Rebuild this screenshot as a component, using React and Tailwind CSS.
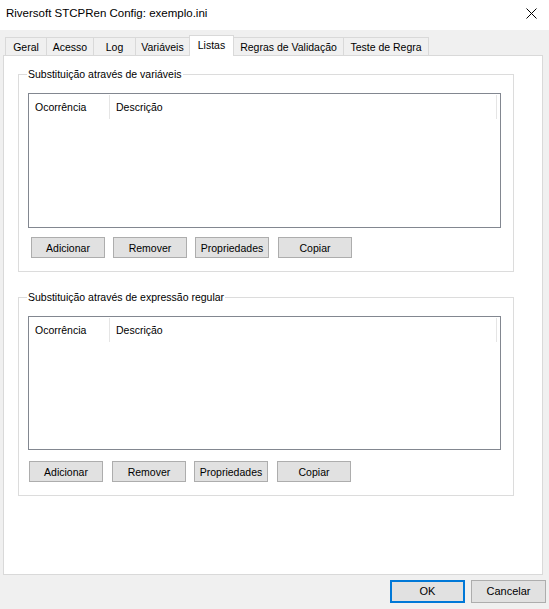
const tabs = [
  { label: "Geral", w: "w-[42px]" },
  { label: "Acesso", w: "w-[48px]" },
  { label: "Log", w: "w-[43px]" },
  { label: "Variáveis", w: "w-[55px]" },
  { label: "Listas", w: "w-[45px]", selected: true },
  { label: "Regras de Validação", w: "w-[111px]" },
  { label: "Teste de Regra", w: "w-[86px]" },
];

function Tab({ label, w, selected, first }) {
  if (selected) {
    return (
      <div
        className={`${w} h-[21px] -mb-px -ml-px relative z-10 bg-white border border-b-0 border-[#d9d9d9] flex items-start justify-center pt-[4px] leading-none`}
      >
        {label}
      </div>
    );
  }
  return (
    <div
      className={`${w} h-[18px] ${first ? "" : "-ml-px"} bg-[#f0f0f0] border border-b-0 border-[#d9d9d9] flex items-center justify-center leading-none pt-px`}
    >
      {label}
    </div>
  );
}

function Btn({ children, className = "" }) {
  return (
    <div
      className={`w-[74px] h-[21px] bg-[#e1e1e1] border border-[#adadad] flex items-center justify-center leading-none pt-px ${className}`}
    >
      {children}
    </div>
  );
}

function ListView({ h }) {
  return (
    <div className={`ml-[9px] w-[473px] ${h} border border-[#828790] bg-white`}>
      <div className="h-[25px] flex items-stretch">
        <div className="w-[80px] flex items-center pl-[6px] leading-none pt-px">Ocorrência</div>
        <div className="w-px bg-[#e5e5e5] mt-px" />
        <div className="w-[386px] flex items-center pl-[6px] leading-none pt-px">Descrição</div>
        <div className="w-px bg-[#e5e5e5] mt-px" />
      </div>
    </div>
  );
}

function Group({ title, className, listH, btnMt, btnMl, gaps }) {
  return (
    <div className={`relative w-[496px] border border-[#dcdcdc] flex flex-col ${className}`}>
      <span className="absolute left-[8px] -top-[6px] bg-white px-px leading-none">{title}</span>
      <div className="mt-[18px]">
        <ListView h={listH} />
      </div>
      <div className={`flex ${btnMt} ${btnMl}`}>
        <Btn>Adicionar</Btn>
        <Btn className={gaps[0]}>Remover</Btn>
        <Btn className={gaps[1]}>Propriedades</Btn>
        <Btn className={gaps[2]}>Copiar</Btn>
      </div>
    </div>
  );
}

export default function App() {
  return (
    <div className="w-[549px] h-[609px] bg-[#f0f0f0] flex flex-col font-['Liberation_Sans',Arial,sans-serif] text-[10.5px] text-black overflow-hidden">
      <div className="h-[30px] bg-white flex items-center shrink-0">
        <span className="ml-[6px] text-[11.5px] leading-none -mt-[3px]">Riversoft STCPRen Config: exemplo.ini</span>
        <svg className="ml-auto mr-[12px] -mt-[4px]" width="11" height="11" viewBox="0 0 11 11">
          <path d="M0.5 0.5L10.5 10.5M10.5 0.5L0.5 10.5" stroke="#000" strokeWidth="1" />
        </svg>
      </div>

      <div className="mt-[5px] h-[20px] flex items-end pl-[5px] shrink-0">
        {tabs.map((t, i) => (
          <Tab key={t.label} {...t} first={i === 0} />
        ))}
      </div>

      <div className="ml-[3px] w-[540px] h-[520px] border border-[#d9d9d9] bg-white flex flex-col pl-[14px] shrink-0">
        <Group
          title="Substituição através de variáveis"
          className="mt-[18px] h-[198px]"
          listH="h-[135px]"
          btnMt="mt-[9px]"
          btnMl="ml-[12px]"
          gaps={["ml-[8px]", "ml-[8px]", "ml-[9px]"]}
        />
        <Group
          title="Substituição através de expressão regular"
          className="mt-[25px] h-[199px]"
          listH="h-[134px]"
          btnMt="mt-[11px]"
          btnMl="ml-[10px]"
          gaps={["ml-[9px]", "ml-[8px]", "ml-[9px]"]}
        />
      </div>

      <div className="mt-[5px] flex justify-end pr-[3px] gap-[6px]">
        <div className="w-[75px] h-[23px] bg-[#e1e1e1] border-2 border-[#0078d7] flex items-center justify-center leading-none text-[11px]">
          OK
        </div>
        <div className="w-[75px] h-[23px] bg-[#e1e1e1] border border-[#adadad] flex items-center justify-center leading-none text-[11px]">
          Cancelar
        </div>
      </div>
    </div>
  );
}
